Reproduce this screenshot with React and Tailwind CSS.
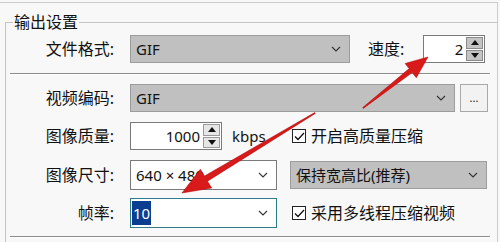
import React from "react";

const FONT = { fontFamily: '"Noto Sans", "Noto Sans CJK SC", sans-serif' };

function Chevron() {
  return (
    <svg width="10" height="6" viewBox="0 0 10 6" className="shrink-0">
      <path d="M1 1 L5 5 L9 1" fill="none" stroke="#333" strokeWidth="1.1" />
    </svg>
  );
}

function Combo({ w, gray, children }) {
  const base = gray ? "bg-[#c0c0c0] border-[#9c9c9c]" : "bg-white border-[#7a7a7a]";
  return (
    <div className={`${w} h-full border ${base} flex items-center pl-[5px] pr-[8px] shrink-0`}>
      <div className="flex-1 text-[15px] text-[#111] leading-[20px] whitespace-nowrap">{children}</div>
      <Chevron />
    </div>
  );
}

function SpinBtn({ up, dark }) {
  return (
    <div className={`flex-1 flex items-center justify-center border ${dark ? "bg-[#c4c4c4] border-[#8a8a8a]" : "bg-[#e6e6e6] border-[#9a9a9a]"}`}>
      <svg width="8" height="5" viewBox="0 0 8 5">
        {up ? <path d="M0 5 L4 0 L8 5 Z" fill="#111" /> : <path d="M0 0 L4 5 L8 0 Z" fill="#111" />}
      </svg>
    </div>
  );
}

function Spin({ w, value, dark }) {
  return (
    <div className={`${w} h-full bg-white border border-[#7a7a7a] flex items-stretch shrink-0`}>
      <div className="flex-1 flex items-center justify-end pr-[3px] text-[15px] text-[#111] leading-[20px]">{value}</div>
      <div className="w-[18px] flex flex-col py-[1px] pr-[1px] gap-[1px]">
        <SpinBtn up dark={dark} />
        <SpinBtn dark={dark} />
      </div>
    </div>
  );
}

function Check({ label }) {
  return (
    <div className="flex items-center">
      <div className="w-[14px] h-[14px] border border-[#222] bg-white flex items-center justify-center">
        <svg width="11" height="9" viewBox="0 0 11 9">
          <path d="M1 4.5 L4 7.5 L10 1" fill="none" stroke="#111" strokeWidth="1.3" />
        </svg>
      </div>
      <span className="ml-[5px] text-[16px] text-[#111] leading-[20px] whitespace-nowrap">{label}</span>
    </div>
  );
}

function Label({ children }) {
  return <div className="w-[108px] text-right text-[16px] text-[#111] leading-[20px] shrink-0">{children}</div>;
}

function Sep() {
  return <div className="ml-[4px] w-[480px] border-t border-[#8c8c8c] border-b border-b-white" />;
}

export default function App() {
  return (
    <div className="relative w-[500px] h-[242px] overflow-hidden bg-[#f8f8f8]" style={FONT}>
      <div className="mt-[2px] w-[498px] h-[240px] border-t border-r border-[#cccccc]">
        <fieldset className="ml-[5px] mt-[9px] border-t border-l border-[#c4c4c4] h-[240px]">
          <legend className="ml-[7px] px-[1px] text-[16px] leading-[20px] text-[#111]">输出设置</legend>

          <div className="mt-[3px] h-[28px] flex items-center">
            <Label>文件格式:</Label>
            <div className="ml-[16px] h-full flex items-center">
              <Combo w="w-[220px]" gray>GIF</Combo>
              <span className="ml-[18px] text-[16px] text-[#111] leading-[20px]">速度:</span>
              <div className="ml-[19px] h-full">
                <Spin w="w-[62px]" value="2" dark />
              </div>
            </div>
          </div>

          <div className="mt-[10px]"><Sep /></div>

          <div className="mt-[9px] h-[28px] flex items-center">
            <Label>视频编码:</Label>
            <div className="ml-[16px] h-full flex items-center">
              <Combo w="w-[325px]" gray>GIF</Combo>
              <div className="ml-[5px] w-[28px] h-full border border-[#a8a8a8] bg-[#f2f2f2] flex items-center justify-center text-[11px] text-[#111] leading-[14px]">...</div>
            </div>
          </div>

          <div className="mt-[10px] h-[28px] flex items-center">
            <Label>图像质量:</Label>
            <div className="ml-[16px] h-full w-[160px] flex items-center shrink-0">
              <Spin w="w-[92px]" value="1000" />
              <span className="ml-[10px] text-[15px] text-[#111] leading-[20px]">kbps</span>
            </div>
            <div className="ml-[2px]"><Check label="开启高质量压缩" /></div>
          </div>

          <div className="mt-[10px] h-[30px] flex items-center">
            <Label>图像尺寸:</Label>
            <div className="ml-[16px] h-full flex items-center">
              <Combo w="w-[147px]">640 × 480</Combo>
              <div className="ml-[13px] h-[28px]">
                <Combo w="w-[197px]" gray>保持宽高比(推荐)</Combo>
              </div>
            </div>
          </div>

          <div className="mt-[8px] h-[30px] flex items-center">
            <Label>帧率:</Label>
            <div className="ml-[16px] h-full flex items-center">
              <div className="w-[147px] h-full border border-[#2f7d8c] bg-white flex items-center pl-[1px] pr-[8px] shrink-0">
                <div className="flex-1 flex items-center">
                  <span className="bg-[#0a3d8f] text-white text-[15px] leading-[24px] px-[1px]">10</span>
                </div>
                <Chevron />
              </div>
              <div className="ml-[15px]"><Check label="采用多线程压缩视频" /></div>
            </div>
          </div>

          <div className="mt-[8px]"><Sep /></div>
        </fieldset>
      </div>

      <svg className="absolute inset-0 pointer-events-none" width="500" height="242" viewBox="0 0 500 242">
        <polygon
          points="363.3,108.4 412.2,72.6 416.3,77.7 428,57 405.1,63.5 409.2,68.6 362.7,107.6"
          fill="#d91a1a"
          stroke="#b00000"
          strokeWidth="0.5"
        />
        <polygon
          points="315.3,113.4 207.5,181.2 211.7,188.0 182,193 200.3,169.2 204.5,176.0 314.7,112.6"
          fill="#d91a1a"
          stroke="#b00000"
          strokeWidth="0.5"
        />
      </svg>
    </div>
  );
}
